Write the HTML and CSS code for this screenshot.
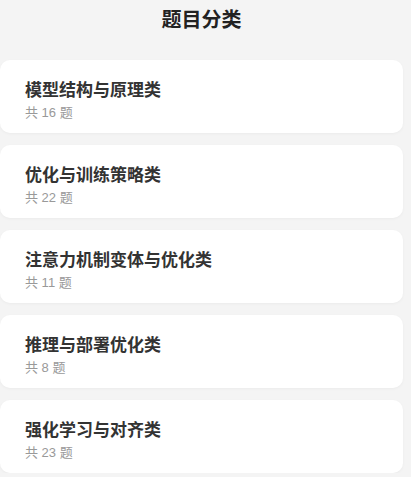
FILE: index.html
```html
<!DOCTYPE html>
<html lang="zh-CN">
<head>
  <meta charset="UTF-8">
  <meta name="viewport" content="width=device-width, initial-scale=1.0">
  <title>题目分类</title>
  <link rel="stylesheet" href="styles.css">
</head>
<body>
  <main class="page">
    <header class="page-title">题目分类</header>
    <ul class="category-list">
      <li class="category-card">
        <div class="category-name">模型结构与原理类</div>
        <div class="category-count">共 16 题</div>
      </li>
      <li class="category-card">
        <div class="category-name">优化与训练策略类</div>
        <div class="category-count">共 22 题</div>
      </li>
      <li class="category-card">
        <div class="category-name">注意力机制变体与优化类</div>
        <div class="category-count">共 11 题</div>
      </li>
      <li class="category-card">
        <div class="category-name">推理与部署优化类</div>
        <div class="category-count">共 8 题</div>
      </li>
      <li class="category-card">
        <div class="category-name">强化学习与对齐类</div>
        <div class="category-count">共 23 题</div>
      </li>
    </ul>
  </main>
</body>
</html>
```

FILE: styles.css
```css
* {
  box-sizing: border-box;
  font-family: "Noto Sans CJK SC", "Liberation Sans", sans-serif;
}

body {
  margin: 0;
  padding: 0;
  background: #f4f4f4;
  color: #333;
}

.page {
  width: 403px;
}

.page-title {
  height: 38px;
  line-height: 38px;
  text-align: center;
  font-size: 20px;
  font-weight: bold;
  color: #222;
}

.category-list {
  list-style: none;
  margin: 22px 0 0;
  padding: 0;
  display: flex;
  flex-direction: column;
  gap: 12px;
}

.category-card {
  height: 73px;
  padding: 17px 25px 0;
  background: white;
  border-radius: 10px;
  box-shadow: 0 1px 3px rgba(0,0,0,0.04);
}

.category-name {
  font-size: 17px;
  line-height: 24px;
  font-weight: bold;
  color: #333;
}

.category-count {
  margin-top: 4px;
  font-family: "Liberation Sans", "Noto Sans CJK SC", sans-serif;
  font-size: 13px;
  line-height: 16px;
  color: #999;
}
```
